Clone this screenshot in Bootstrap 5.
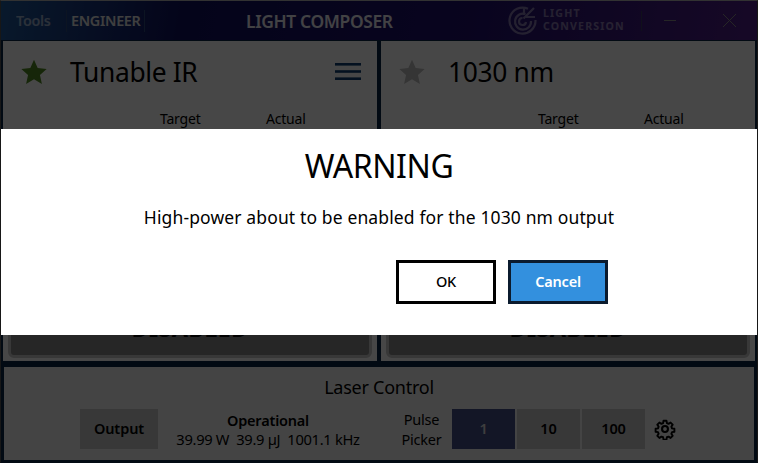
<!DOCTYPE html>
<html lang="en"><head><meta charset="utf-8"><title>Light Composer</title>
<link href="https://cdn.jsdelivr.net/npm/bootstrap@5.3.0/dist/css/bootstrap.min.css" rel="stylesheet">
<style>
html,body{height:463px;width:758px;overflow:hidden;margin:0;background:#fff;font-family:"Noto Sans","Open Sans",sans-serif;color:#000}
.lc-app{height:463px;border:1px solid #0a2747;border-top:1px solid #b4b4b4;border-left-color:#555;border-right-color:#555;background:#0a2747}
.lc-title{height:39px;background:linear-gradient(100deg,#1f5a9c 0%,#10105e 24%,#20106e 62%,#521f8a 100%);color:#fff;flex:none}
.lc-tool{font-weight:600;font-size:14.4px;letter-spacing:-.3px;line-height:22px;padding:0 5px}
.lc-tools{width:50px;padding-left:15px;opacity:.55}
.lc-eng{border-left:1px solid #2c4a7c;border-right:1px solid #2c4a7c;padding:0 0 0 4px;width:79px;margin-left:15px;color:#e2e2e2}
.lc-name{font-weight:600;font-size:17.4px;letter-spacing:-.35px;left:245px;top:9px;line-height:22px;color:#ececf4}
.lc-main{flex:1 1 auto;min-height:0;gap:2px;padding:0 1px}
.lc-panel{flex:1 1 0;background:#fff;border:1px solid #0a2747;padding:0 5px 3px 5px}
.lc-head{height:61px;padding:0 11px 0 13px}
.lc-head svg.lc-star{width:26px;height:26px;margin-right:23px}
.lc-ptitle{font-size:26.4px;letter-spacing:-.35px;line-height:32px}
.lc-burger{fill:#0f3f72}
.lc-cols{height:24px;font-size:14px;letter-spacing:-.2px;margin-top:6px;position:relative}
.lc-cols span{position:absolute}
.lc-c1{left:152px}.lc-c2{left:258px}
.lc-disabled{background:#888;border:3px solid #c8c8c8;border-radius:6px;height:51px;padding-bottom:8px;font-weight:700;font-size:23.5px;letter-spacing:.3px;color:#000}
.lc-laser{height:97px;flex:none;margin:3px 1px 0;background:#f4f4f4;border:2px solid #0a2747}
.lc-ltitle{font-size:18px;line-height:24px;letter-spacing:-.25px;padding-top:8px;height:34px}
.lc-lrow{margin-top:8px;padding-left:76px}
.lc-sq{height:40px;background:#c8c8c8;border:0;font-weight:600;font-size:14.5px;letter-spacing:-.1px;color:#000;display:flex;align-items:center;justify-content:center;padding:0}
.lc-out{width:78px}
.lc-op{width:220px;text-align:center;font-size:14.7px;line-height:19px;letter-spacing:-.3px}
.lc-opt{font-weight:600;font-size:14.5px;letter-spacing:-.2px;line-height:20px}
.lc-pp{width:61px;text-align:center;font-size:14.5px;line-height:20px;letter-spacing:-.2px;margin-left:13px}
.lc-pick{width:63px;margin-left:2px}
.lc-pick.lc-on{background:#45508a;color:#ddd;margin-left:0}
.lc-gear{width:22px;height:22px;margin-left:9px}
.lc-shade{position:absolute;top:-1px;left:-1px;right:-1px;bottom:-1px;background:rgba(0,0,0,.72)}
.lc-dlg{background:#fff;height:206px;margin:0 1px;width:756px;padding-top:18px}
.lc-warn{font-size:32px;line-height:38px;letter-spacing:-.45px;text-align:center}
.lc-msg{font-size:17.5px;line-height:24px;letter-spacing:.13px;text-align:center;margin-top:20px}
.lc-btns{margin-top:31px;gap:12px;padding-right:149px}
.lc-btn{width:100px;height:44px;border:3px solid #000;border-radius:0;font-weight:500;font-size:14.5px;letter-spacing:-.2px;padding:0;background:#fff;color:#000}
.lc-btn.lc-cancel{background:#3390de;color:#fff;border-color:#0b1b2e;font-weight:600}
.lc-logo{left:507px;top:4px;opacity:.42;gap:5px}
.lc-lt{font-size:10.6px;line-height:13px;font-weight:700;letter-spacing:1.15px;color:#fff}
.lc-sep{left:640px;top:10px;width:1px;height:20px;background:#3b3b60;position:absolute}
.lc-ctl{left:663px;top:11px}
</style></head>
<body>
<div class="lc-app d-flex flex-column position-relative">
  <div class="lc-title d-flex align-items-center position-relative">
    <div class="lc-tool lc-tools">Tools</div>
    <div class="lc-tool lc-eng">ENGINEER</div>
    <div class="lc-name position-absolute">LIGHT COMPOSER</div>
    <div class="lc-logo position-absolute d-flex align-items-center">
      <svg width="30" height="30" viewBox="0 0 30 30" fill="none" stroke="#fff" stroke-width="2.2"><path d="M20 3.8A13 13 0 1 0 27.5 15"/><path d="M17.5 9A8 8 0 1 0 23 16"/><path d="M14.5 13A3.5 3.5 0 1 0 18 17"/><path d="M15.5 13.5L26 3M18 12h9M16 10V2"/></svg>
      <div class="lc-lt">LIGHT<br>CONVERSION</div>
    </div>
    <div class="lc-sep"></div>
    <svg class="lc-ctl position-absolute" width="80" height="18" viewBox="0 0 80 18" stroke="#888" fill="none" stroke-width="1"><path d="M0 8.5h12M59 2l13 13M72 2L59 15"/></svg>
  </div>
  <div class="lc-main d-flex">
    <div class="lc-panel d-flex flex-column">
      <div class="lc-head d-flex align-items-center">
        <svg class="lc-star" viewBox="0 0 24 24"><path fill="#4f8a22" d="M12 .8l3.4 7.6 8.3.9-6.2 5.5 1.8 8.2L12 18.8 4.7 23l1.8-8.2L.3 9.3l8.3-.9z"/></svg>
        <div class="lc-ptitle flex-grow-1">Tunable IR</div>
        <svg class="lc-burger" width="26" height="20" viewBox="0 0 26 20"><rect y="1" width="26" height="2.6"/><rect y="8.2" width="26" height="2.6"/><rect y="15.4" width="26" height="2.6"/></svg>
      </div>
      <div class="lc-cols"><span class="lc-c1">Target</span><span class="lc-c2">Actual</span></div>
      <div class="flex-grow-1"></div>
      <div class="lc-disabled d-flex align-items-center justify-content-center">DISABLED</div>
    </div>
    <div class="lc-panel d-flex flex-column">
      <div class="lc-head d-flex align-items-center">
        <svg class="lc-star" viewBox="0 0 24 24"><path fill="#bdbdbd" d="M12 .8l3.4 7.6 8.3.9-6.2 5.5 1.8 8.2L12 18.8 4.7 23l1.8-8.2L.3 9.3l8.3-.9z"/></svg>
        <div class="lc-ptitle flex-grow-1">1030 nm</div>
      </div>
      <div class="lc-cols"><span class="lc-c1">Target</span><span class="lc-c2">Actual</span></div>
      <div class="flex-grow-1"></div>
      <div class="lc-disabled d-flex align-items-center justify-content-center">DISABLED</div>
    </div>
  </div>
  <div class="lc-laser">
    <div class="lc-ltitle text-center">Laser Control</div>
    <div class="lc-lrow d-flex align-items-center">
      <div class="lc-sq lc-out">Output</div>
      <div class="lc-op"><div class="lc-opt">Operational</div><div>39.99 W&nbsp; 39.9 µJ&nbsp; 1001.1 kHz</div></div>
      <div class="lc-pp">Pulse<br>Picker</div>
      <div class="lc-sq lc-pick lc-on">1</div>
      <div class="lc-sq lc-pick">10</div>
      <div class="lc-sq lc-pick">100</div>
      <svg class="lc-gear" viewBox="0 0 24 24" fill="none" stroke="#000" stroke-width="2.3" stroke-linejoin="round"><circle cx="12" cy="12" r="3.2"/><path d="M10.2 2h3.6l.5 2.9 2 .9 2.5-1.6 2.5 2.5-1.6 2.5.8 2 2.9.5v3.6l-2.9.5-.8 2 1.6 2.5-2.5 2.5-2.5-1.6-2 .8-.5 2.9h-3.6l-.5-2.9-2-.8-2.5 1.6-2.5-2.5 1.6-2.5-.8-2-2.9-.5v-3.6l2.9-.5.8-2-1.6-2.5 2.5-2.5 2.5 1.6 2-.9z" transform="translate(1.2 1.2) scale(.9)"/></svg>
    </div>
  </div>
  <div class="lc-shade d-flex align-items-center">
    <div class="lc-dlg">
      <div class="lc-warn">WARNING</div>
      <div class="lc-msg">High-power about to be enabled for the 1030 nm output</div>
      <div class="lc-btns d-flex justify-content-end">
        <button class="lc-btn" type="button">OK</button>
        <button class="lc-btn lc-cancel" type="button">Cancel</button>
      </div>
    </div>
  </div>
</div>
</body></html>
